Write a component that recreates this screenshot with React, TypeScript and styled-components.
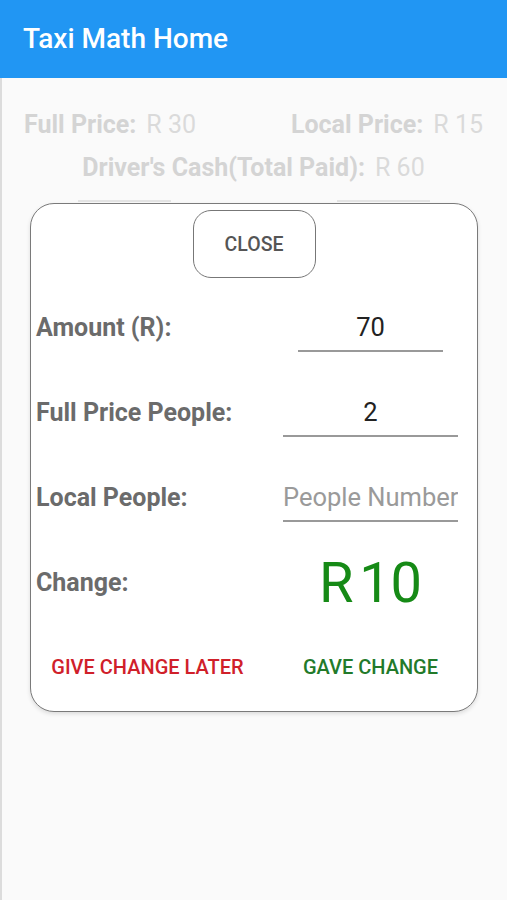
import React from "react";
import styled, { createGlobalStyle } from "styled-components";

const GlobalStyle = createGlobalStyle`
  html, body {
    margin: 0;
    padding: 0;
    background: #fafafa;
    font-family: Roboto, "Liberation Sans", sans-serif;
  }
`;

const Screen = styled.div`
  position: relative;
  width: 507px;
  height: 900px;
  background: #fafafa;
  box-shadow: inset 2px 0 0 #dcdcdc;
  overflow: hidden;
`;

const AppBar = styled.header`
  height: 78px;
  background: #2196f3;
  display: flex;
  align-items: center;
  padding-left: 23px;
  box-sizing: border-box;
`;

const Title = styled.h1`
  margin: 0;
  color: #fff;
  font-size: 28px;
  font-weight: 500;
  padding-bottom: 2px;
`;

const Summary = styled.div`
  padding: 31px 24px 0 24px;
  display: flex;
  flex-direction: column;
  gap: 11px;
`;

const SummaryRow = styled.div<{ $center?: boolean }>`
  display: flex;
  justify-content: ${(p) => (p.$center ? "center" : "space-between")};
  font-size: 25px;
  line-height: 32px;
`;

const FadedLabel = styled.span`
  font-weight: 700;
  color: #d4d4d4;
  margin-right: 10px;
`;

const FadedValue = styled.span`
  color: #dadada;
`;

const HiddenButtons = styled.div`
  display: flex;
  justify-content: space-between;
  padding: 0 77px 0 78px;
  margin-top: 16px;
`;

const HiddenButton = styled.div`
  width: 93px;
  height: 40px;
  border-top: 2px solid #e4e4e4;
`;

const Dialog = styled.div`
  position: absolute;
  left: 30px;
  top: 203px;
  width: 448px;
  height: 509px;
  box-sizing: border-box;
  border: 1.5px solid #7a7a7a;
  border-radius: 24px;
  background: #fff;
  box-shadow: 0 2px 4px rgba(0, 0, 0, 0.12);
  display: flex;
  flex-direction: column;
  align-items: stretch;
  padding: 6px 19px 0 5px;
`;

const CloseButton = styled.button`
  align-self: center;
  width: 123px;
  height: 68px;
  margin-left: 14px;
  border: 1.5px solid #777;
  border-radius: 18px;
  background: #fff;
  color: #555;
  font-family: inherit;
  font-size: 19.5px;
  font-weight: 500;
  margin-bottom: 7px;
`;

const FieldRow = styled.div`
  display: grid;
  grid-template-columns: 1fr 175px;
  align-items: center;
  height: 85px;
`;

const Label = styled.span`
  font-size: 25px;
  font-weight: 700;
  color: #6b6b6b;
  padding-bottom: 1px;
`;

const Input = styled.input<{ $narrow?: boolean }>`
  justify-self: center;
  width: ${(p) => (p.$narrow ? "145px" : "175px")};
  height: 48px;
  box-sizing: border-box;
  border: none;
  border-bottom: 2px solid #999;
  background: transparent;
  font-family: inherit;
  font-size: 25.5px;
  color: #222;
  text-align: center;
  padding: 0;
  outline: none;
  &::placeholder {
    color: #9a9a9a;
  }
`;

const ChangeValue = styled.span`
  justify-self: center;
  font-size: 56px;
  color: #168a16;
  line-height: 1;
  padding-top: 1px;
`;

const Actions = styled.div`
  display: grid;
  grid-template-columns: 1fr 175px;
  align-items: center;
  height: 84px;
`;

const ActionButton = styled.button<{ $tone: string }>`
  justify-self: ${(p) => (p.$tone === "red" ? "start" : "center")};
  width: ${(p) => (p.$tone === "red" ? "221px" : "175px")};
  margin-left: ${(p) => (p.$tone === "red" ? "1px" : "0")};
  border: none;
  background: transparent;
  font-family: inherit;
  font-size: 20px;
  font-weight: 500;
  color: ${(p) => (p.$tone === "red" ? "#d0202a" : "#227a2a")};
  padding: 0;
`;

export default function App() {
  return (
    <Screen>
      <GlobalStyle />
      <AppBar>
        <Title>Taxi Math Home</Title>
      </AppBar>
      <Summary>
        <SummaryRow>
          <span>
            <FadedLabel>Full Price:</FadedLabel>
            <FadedValue>R 30</FadedValue>
          </span>
          <span>
            <FadedLabel>Local Price:</FadedLabel>
            <FadedValue>R 15</FadedValue>
          </span>
        </SummaryRow>
        <SummaryRow $center>
          <span>
            <FadedLabel>Driver's Cash(Total Paid):</FadedLabel>
            <FadedValue>R 60</FadedValue>
          </span>
        </SummaryRow>
      </Summary>
      <HiddenButtons>
        <HiddenButton />
        <HiddenButton />
      </HiddenButtons>

      <Dialog>
        <CloseButton>CLOSE</CloseButton>
        <FieldRow>
          <Label>Amount (R):</Label>
          <Input $narrow defaultValue="70" />
        </FieldRow>
        <FieldRow>
          <Label>Full Price People:</Label>
          <Input defaultValue="2" />
        </FieldRow>
        <FieldRow>
          <Label>Local People:</Label>
          <Input placeholder="People Number" />
        </FieldRow>
        <FieldRow>
          <Label>Change:</Label>
          <ChangeValue>R{"\u200A"}10</ChangeValue>
        </FieldRow>
        <Actions>
          <ActionButton $tone="red">GIVE CHANGE LATER</ActionButton>
          <ActionButton $tone="green">GAVE CHANGE</ActionButton>
        </Actions>
      </Dialog>
    </Screen>
  );
}
